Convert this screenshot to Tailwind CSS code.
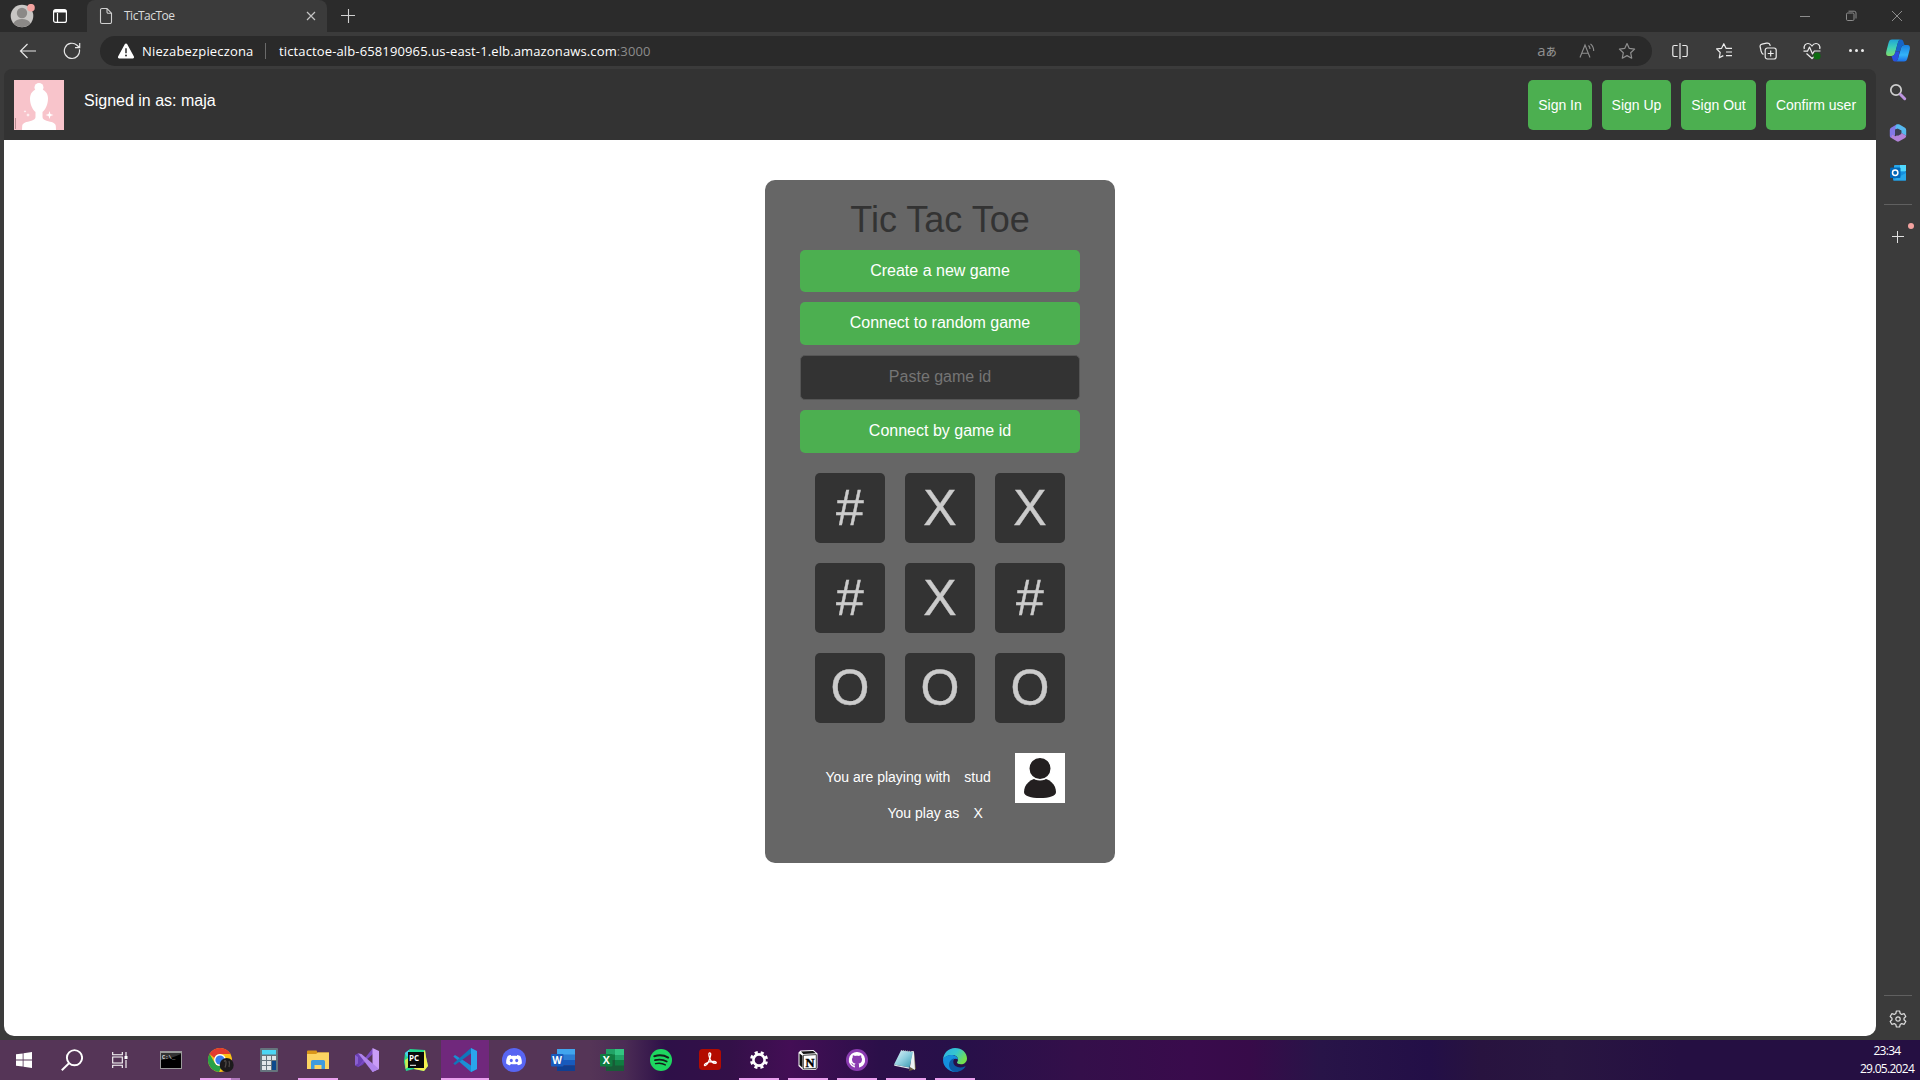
<!DOCTYPE html>
<html lang="pl">
<head>
<meta charset="utf-8">
<title>TicTacToe</title>
<script src="https://cdn.jsdelivr.net/npm/@tailwindcss/browser@4"></script>
</head>
<body class="h-screen w-screen overflow-hidden flex flex-col bg-[#3b3b3b] font-['Open_Sans',sans-serif] text-white">

<!-- Title bar -->
<div class="h-8 shrink-0 bg-[#2b2b2b] flex items-center">
  <div class="w-11 flex justify-center">
    <svg class="w-[26px] h-6" viewBox="0 0 26 24"><circle cx="13" cy="12" r="11.3" fill="#c8c6c4"/><circle cx="13" cy="9" r="5.2" fill="#8b8987"/><path d="M4.5 19.3c1.500-3 5-4.300 8.500-4.300s7 1.300 8.500 4.300A11.300 11.300 0 0 1 4.500 19.300z" fill="#8b8987"/><circle cx="22" cy="3.700" r="3.800" fill="#f4a3a0"/></svg>
  </div>
  <div class="w-8 flex justify-center">
    <svg class="w-4 h-4" viewBox="0 0 16 16" fill="none" stroke="#fff" stroke-width="1.200"><rect x="1.600" y="1.600" width="12.800" height="12.800" rx="2"/><path d="M2 4h12M5.500 5v9" /><path d="M2 3h12" stroke-width="2"/></svg>
  </div>
  <div class="ml-[11px] w-[240px] h-8 bg-[#3b3b3b] rounded-t-lg flex items-center pl-3">
    <svg class="w-[14px] h-[18px]" viewBox="0 0 14 18" fill="none" stroke="#d0d0d0" stroke-width="1.100"><path d="M1.500 3a1.500 1.500 0 0 1 1.500-1.500h5l4.500 4.700V15a1.500 1.500 0 0 1-1.500 1.500H3A1.500 1.500 0 0 1 1.500 15zM8 1.500V5a1.200 1.200 0 0 0 1.200 1.200h3.300"/></svg>
    <span class="ml-[11px] flex-1 text-[12px] leading-4 tracking-[-0.5px] text-[#dcdcdc]">TicTacToe</span>
    <svg class="w-[10px] h-[10px] mr-[11px]" viewBox="0 0 10 10" stroke="#c4c4c4" stroke-width="1.200"><path d="M1 1l8 8M9 1l-8 8"/></svg>
  </div>
  <svg class="ml-3.5 w-[14px] h-[14px]" viewBox="0 0 14 14" stroke="#d0d0d0" stroke-width="1.100"><path d="M7.500 0v14M0 6.500h14"/></svg>
  <div class="ml-auto flex">
    <div class="w-[46px] flex justify-center"><svg class="w-3 h-3" viewBox="0 0 12 12" stroke="#8d8d8d"><path d="M1 6.500h10"/></svg></div>
    <div class="w-[46px] flex justify-center"><svg class="w-3 h-3" viewBox="0 0 12 12" fill="none" stroke="#8d8d8d"><rect x="1.500" y="3" width="7.500" height="7.500" rx="1.200"/><path d="M3.500 1.200h5.700a1.800 1.800 0 0 1 1.800 1.800v5.500"/></svg></div>
    <div class="w-[46px] flex justify-center"><svg class="w-3 h-3" viewBox="0 0 12 12" stroke="#8d8d8d"><path d="M1 1l10 10M11 1L1 11"/></svg></div>
  </div>
</div>

<!-- Toolbar -->
<div class="h-[37px] shrink-0 bg-[#3b3b3b] flex items-center pl-1.5">
  <div class="w-11 flex justify-center"><svg class="w-[18px] h-4" viewBox="0 0 18 16" fill="none" stroke="#e6e6e6" stroke-width="1.200"><path d="M17 8H1.500M8.500 1L1.500 8l7 7"/></svg></div>
  <div class="w-11 flex justify-center"><svg class="w-[18px] h-[18px]" viewBox="0 0 18 18" fill="none" stroke="#e6e6e6" stroke-width="1.200"><path d="M16.400 7.400A7.600 7.600 0 1 1 14 3.200l2.500 2.300M16.700 1v4.700H12"/></svg></div>
  <div class="ml-1.5 w-[1552px] h-[30px] mt-px rounded-full bg-[#2a2a2a] flex items-center pr-[5px]">
    <svg class="ml-[17px] w-[18px] h-4" viewBox="0 0 18 16"><path d="M9 .5c.5 0 .9.300 1.100.6l6.800 12.500c.5.900-.1 1.900-1.100 1.900H2.200c-1 0-1.600-1-1.100-1.900L7.900 1.100C8.100.800 8.500.5 9 .5z" fill="#fff"/><path d="M9 5.200v5" stroke="#2a2a2a" stroke-width="1.500"/><circle cx="9" cy="12.600" r="1" fill="#2a2a2a"/></svg>
    <span class="ml-[7px] w-[112px] text-[13px] leading-[18px] pb-px tracking-[0.16px] whitespace-nowrap">Niezabezpieczona</span>
    <span class="ml-[11px] w-px h-4 bg-[#6a6a6a]"></span>
    <span class="ml-[13px] text-[13px] leading-[18px] pb-px tracking-[0.13px] whitespace-nowrap">tictactoe-alb-658190965.us-east-1.elb.amazonaws.com<span class="text-[#8c8c8c]">:3000</span></span>
    <div class="ml-auto flex items-center text-[#8f8f8f]">
      <div class="w-10 flex items-baseline justify-center leading-5 whitespace-nowrap pb-0.5"><span class="text-[15px]">a</span><span class="text-[11px] font-medium leading-4 font-['Noto_Sans_CJK_JP',sans-serif]">あ</span></div>
      <div class="w-10 flex justify-center"><svg class="w-4 h-4" viewBox="0 0 16 16" fill="none" stroke="currentColor" stroke-width="1.100"><path d="M1 14.500L6 2l5 12.500M2.700 10.200h6.600M9.500 2.500c1 1 1.500 2.200 1.500 3.500M11.500.8c2 1.700 3.200 4.200 3.200 7.200"/></svg></div>
      <div class="w-10 flex justify-center"><svg class="w-[18px] h-[18px]" viewBox="0 0 18 18" fill="none" stroke="currentColor" stroke-width="1.200" stroke-linejoin="round"><path d="M9 1.500l2.300 4.900 5.300.7-3.900 3.700 1 5.400L9 13.600l-4.700 2.600 1-5.400L1.400 7.100l5.300-.7z"/></svg></div>
    </div>
  </div>
  <div class="ml-1.5 flex items-center text-[#ececec]">
    <div class="w-11 pr-px flex justify-center"><svg class="w-4 h-4" viewBox="0 0 16 16" fill="none" stroke="currentColor" stroke-width="1.200"><path d="M8 0v16M5.700 2.500H2.200A1.400 1.400 0 0 0 .8 3.900v8.200a1.400 1.400 0 0 0 1.400 1.400h3.500M10.300 2.500h3.500a1.400 1.400 0 0 1 1.400 1.400v8.200a1.400 1.400 0 0 1-1.400 1.400h-3.500"/></svg></div>
    <div class="w-11 flex justify-center"><svg class="w-[18px] h-[18px]" viewBox="0 0 18 18" fill="none" stroke="currentColor" stroke-width="1.200" stroke-linejoin="round"><path d="M17 6.300h-6L8.800 1.700 6.600 6.300l-5 .6 3.600 3.600-.9 5.300 4-2.200M11 10h6M11 13.700h6"/></svg></div>
    <div class="w-11 flex justify-center"><svg class="w-[18px] h-[18px]" viewBox="0 0 18 18" fill="none" stroke="currentColor" stroke-width="1.200"><rect x="6.200" y="6" width="11" height="11" rx="2.200"/><path d="M11.700 8.500v6M8.700 11.500h6M4.500 12.300C2.500 11.800 2.600 11 2.100 9L1.200 5C.8 3.500 1.500 2.500 3 2.100L7.500 1.200c1.500-.3 3 .2 3.500 1.800l.3.900"/></svg></div>
    <div class="w-11 flex justify-center"><svg class="w-[18px] h-[18px]" viewBox="0 0 18 18" fill="none" stroke="currentColor" stroke-width="1.200" stroke-linejoin="round"><path d="M1.300 7C.5 3.500 2.800 1.500 5 1.500c1.800 0 3 .9 4 2.500 1-1.600 2.200-2.500 4-2.500 2.200 0 4.500 2 3.700 5.500M.5 9.200H4.500L6.500 5l3 7 1.800-3h6.200M3.500 11.500L9 16.500l2-1.800"/><circle cx="14" cy="14" r="3.600" fill="#0e6b12" stroke="none"/></svg></div>
    <div class="w-11 flex justify-center gap-[3px]"><i class="w-[3px] h-[3px] rounded-full bg-current"></i><i class="w-[3px] h-[3px] rounded-full bg-current"></i><i class="w-[3px] h-[3px] rounded-full bg-current"></i></div>
    <div class="w-10 flex justify-center"><svg class="w-6 h-[23px]" viewBox="0 0 24 23">
      <defs><linearGradient id="cpA" x1="0" y1="0" x2="0" y2="1"><stop offset="0" stop-color="#1fa3d8"/><stop offset=".5" stop-color="#3fd0b8"/><stop offset="1" stop-color="#7fdc6a"/></linearGradient><linearGradient id="cpB" x1="0" y1="0" x2="0" y2="1"><stop offset="0" stop-color="#1a7fe0"/><stop offset=".6" stop-color="#33b4f8"/><stop offset="1" stop-color="#1b6fe8"/></linearGradient></defs>
      <path d="M6 .5h9c-2 0-2.800 2-3.500 4.500L9 14c-.5 2-1.500 3-3.500 3H2.500C.3 17-.3 15 .3 12.500L2.500 4C3.200 1.500 4 .5 6 .5z" fill="url(#cpA)"/>
      <path d="M18 22.500H9c2 0 2.800-2 3.500-4.500L15 9c.5-2 1.500-3 3.500-3h3c2.200 0 2.800 2 2.200 4.500L21.500 19c-.7 2.500-1.500 3.500-3.500 3.500z" fill="url(#cpB)"/>
      <path d="M10.500.5H15c1.500 0 2 1 2.500 2.500L18.500 6c-2 0-3 1-3.500 3l-1 3.500h-4.500L11.500 5c.7-2.500 1.500-4.500 3.500-4.500z" fill="#1564c8"/>
      <path d="M9.500 12.500h4L12.500 18c-.7 2.500-1.500 4.500-3.500 4.500s-2-1-2.500-2.500l-1-3c2 0 3-1 3.500-3z" fill="#2a4fdd"/></svg></div>
  </div>
</div>

<!-- Page and side bar -->
<div class="flex-1 min-h-0 flex pl-1">
  <main class="w-[1872px] h-[967px] shrink-0 flex flex-col font-['Liberation_Sans',Arial,sans-serif]">
    <header class="h-[71px] shrink-0 bg-[#333] rounded-t-lg flex items-start px-2.5 pt-[11px]">
      <svg class="w-[50px] h-[50px]" viewBox="0 0 50 50"><rect width="50" height="50" fill="#f8c4cb"/><circle cx="25" cy="7.500" r="4.500" fill="#fff"/><path d="M25 9c6 0 9 4.500 9 9.500 0 6-2.500 11-5.500 13.500v5c0 2 1.500 3 4 3.700 5 1.300 9 1.800 9.300 5.300l.2 4H8l.2-4c.3-3.500 4.300-4 9.300-5.300 2.500-.7 4-1.700 4-3.700v-5C18.500 29.500 16 24.500 16 18.500 16 13.500 19 9 25 9z" fill="#fff"/><path d="M35.500 31l.9 3.100 3.100.9-3.100.9-.9 3.100-.9-3.100-3.100-.9 3.100-.9zM14 33l.5 1.500 1.500.5-1.500.5L14 37l-.5-1.500L12 35l1.500-.5zM11 30l.4 1 1 .4-1 .4-.4 1-.4-1-1-.4 1-.4z" fill="#fff"/><path d="M1.500 38v11" stroke="#b98a90"/></svg>
      <p class="ml-5 mt-3 text-base leading-[18px]">Signed in as: maja</p>
      <nav class="ml-auto flex gap-2.5 text-sm">
        <button class="h-[50px] w-16 rounded-[5px] bg-[#4caf50]">Sign In</button>
        <button class="h-[50px] w-[69px] rounded-[5px] bg-[#4caf50]">Sign Up</button>
        <button class="h-[50px] w-[75px] rounded-[5px] bg-[#4caf50]">Sign Out</button>
        <button class="h-[50px] w-[100px] rounded-[5px] bg-[#4caf50]">Confirm user</button>
      </nav>
    </header>

    <div class="flex-1 bg-white rounded-b-[10px] pt-10">
    <section class="mx-auto w-[350px] h-[683px] rounded-[10px] bg-[#666] flex flex-col items-center">
      <h1 class="mt-[19px] text-[36px] leading-[42px] text-[#333]">Tic Tac Toe</h1>
      <div class="mt-[9px] w-[280px] flex flex-col gap-2.5 text-base leading-[18px]">
        <button class="h-[42px] pb-px rounded-[5px] bg-[#4caf50]">Create a new game</button>
        <button class="h-[43px] pb-0.5 rounded-[5px] bg-[#4caf50]">Connect to random game</button>
        <input class="h-[45px] pb-0.5 rounded-[5px] bg-[#333] border border-[#555] text-center placeholder:text-[#757575]" placeholder="Paste game id">
        <button class="h-[43px] pb-0.5 rounded-[5px] bg-[#4caf50]">Connect by game id</button>
      </div>
      <div class="mt-5 grid grid-cols-3 gap-5 text-[50px] leading-[70px] text-[#ccc] text-center [-webkit-text-stroke:0.4px_#ccc]">
        <div class="size-[70px] rounded-[5px] bg-[#333]">#</div>
        <div class="size-[70px] rounded-[5px] bg-[#333]">X</div>
        <div class="size-[70px] rounded-[5px] bg-[#333]">X</div>
        <div class="size-[70px] rounded-[5px] bg-[#333]">#</div>
        <div class="size-[70px] rounded-[5px] bg-[#333]">X</div>
        <div class="size-[70px] rounded-[5px] bg-[#333]">#</div>
        <div class="size-[70px] rounded-[5px] bg-[#333]">O</div>
        <div class="size-[70px] rounded-[5px] bg-[#333]">O</div>
        <div class="size-[70px] rounded-[5px] bg-[#333]">O</div>
      </div>
      <div class="mt-[30px] w-[250px] flex justify-between text-sm leading-4">
        <div class="pt-4 pl-[10.5px]">
          <p class="flex gap-3.5"><span>You are playing with</span><span>stud</span></p>
          <p class="mt-5 ml-[62px] flex gap-3.5"><span>You play as</span><span>X</span></p>
        </div>
        <svg class="w-[50px] h-[50px]" viewBox="0 0 50 50"><rect width="50" height="50" fill="#fff"/><path d="M25 25c10 0 16 7 16 14 0 4-7 6-16 6S9 43 9 39c0-7 6-14 16-14z" fill="#231f20"/><circle cx="25" cy="15.500" r="11.300" fill="#231f20" stroke="#fff" stroke-width="1.600"/></svg>
      </div>
    </section>
    </div>
  </main>

  <aside class="w-11 flex flex-col items-center">
    <svg class="mt-[14px] mr-px w-[18px] h-[18px]" viewBox="0 0 18 18" fill="none"><circle cx="7" cy="7" r="5.200" stroke="#cfcfcf" stroke-width="1.700"/><path d="M11.500 11.500l4.200 4.200" stroke="#bd94e0" stroke-width="3" stroke-linecap="round"/></svg>
    <svg class="mt-[23px] w-[18px] h-[18px]" viewBox="0 0 18 18"><path d="M7.500.5L2 3.700A2.500 2.500 0 0 0 .8 5.900v5.800c0 .9.500 1.700 1.200 2.100L6 11.500V5.800l5-2.600z" fill="#8378e6"/><path d="M7.500.6c1-.6 2-.6 3 0L16 3.800c.8.500 1.200 1.200 1.200 2.100v5.800L12.300 9V6.500L6 4.200z" fill="#56b9ef"/><path d="M2 13.800L7.800 17.300c.8.500 1.600.5 2.400 0L16 14c.8-.5 1.200-1.300 1.200-2.200L12.500 9l-6.300 3.300-3-1.600z" fill="#b183d8"/><path d="M6 6l2.600-1.400 3.600 2v3.300L9 11.800l-3-1.500z" fill="#3d3f52"/></svg>
    <svg class="mt-[22px] w-[18px] h-[18px]" viewBox="0 0 18 18"><rect x="5" y="1" width="12" height="7" rx="1" fill="#28a8ea"/><rect x="11" y="1" width="6" height="6" fill="#50d9ff"/><path d="M4 8h13v7.500a1 1 0 0 1-1 1H5a1 1 0 0 1-1-1z" fill="#1490df"/><path d="M4 16l13-7v7.500H5z" fill="#28a8ea"/><rect x="1" y="3.500" width="10.500" height="10.500" rx="1" fill="#0067b8"/><circle cx="6.200" cy="8.700" r="2.700" fill="none" stroke="#fff" stroke-width="1.500"/></svg>
    <div class="mt-[22px] w-7 h-px bg-[#606060]"></div>
    <div class="relative mt-[26px] w-3 h-3">
      <svg class="w-3 h-3" viewBox="0 0 12 12" stroke="#e0e0e0"><path d="M5.500 0v12M0 5.500h12"/></svg>
      <i class="absolute left-4 -top-2 w-1.5 h-1.5 rounded-full bg-[#f4a3a0]"></i>
    </div>
    <div class="mt-auto w-7 h-px bg-[#606060]"></div>
    <svg class="mt-[14px] mb-[12px] w-[18px] h-[18px]" viewBox="0 0 18 18" fill="none" stroke="#dcdcdc" stroke-width="1.200" stroke-linejoin="round"><circle cx="9" cy="9" r="2.200"/><path d="M7.400 1h3.200l.6 2.500 1.500.9 2.500-.7 1.600 2.800L15 8.200v1.600l1.800 1.700-1.600 2.800-2.500-.7-1.500.9-.6 2.500H7.400l-.6-2.500-1.500-.9-2.500.7-1.600-2.800L3 9.800V8.200L1.200 6.500l1.600-2.800 2.500.7 1.500-.9z"/></svg>
  </aside>
</div>

<!-- Taskbar -->
<div class="h-10 shrink-0 flex bg-[linear-gradient(90deg,#553557_0px,#553557_590px,#4b2c55_625px,#2e1048_665px,#331048_730px,#430e55_790px,#2b0f49_880px,#271049_960px,#340f4a_1080px,#390b4c_1190px,#370b49_1250px,#281448_1320px,#230f47_1430px,#28133f_1480px,#291641_1560px,#250f42_1680px,#250f42_1920px)]">
  <div class="w-12 flex items-center justify-center"><svg class="w-4 h-4" viewBox="0 0 16 16" fill="#fff"><path d="M0 2.300l6.700-.9v6.200H0zM7.500 1.300L16 0v7.600H7.500zM0 8.400h6.700v6.200L0 13.700zM7.500 8.400H16V16l-8.500-1.200z"/></svg></div>
  <div class="w-12 flex items-center justify-center"><svg class="w-[22px] h-[22px]" viewBox="0 0 22 22" fill="none" stroke="#fff" stroke-width="1.900"><circle cx="13.500" cy="8.700" r="7.600"/><path d="M8 14.200L.8 21.300"/></svg></div>
  <div class="w-12 flex items-center justify-center"><svg class="w-4 h-4" viewBox="0 0 16 16" fill="none" stroke="#fff" stroke-width="1.100"><path d="M.7 0v2.700h9.600V0M.7 16v-2.700h9.600V16M.7 5h9.600v6H.7zM14 0v4M14 8v8"/><rect x="12.500" y="4" width="3" height="3" fill="#fff" stroke="none"/></svg></div>
  <div class="ml-[3px] flex gap-px">
    <div class="w-12 flex items-center justify-center"><svg class="w-[22px] h-[18px]" viewBox="0 0 22 18"><rect width="22" height="18" fill="#9a9a9a"/><rect x="1" y="2" width="20" height="15" fill="#000"/><path d="M1 9Q10 8 21 3V2H1z" fill="#333"/><text x="2" y="7.500" font-size="5.500" fill="#ddd" font-family="Liberation Mono" font-weight="bold">C:\_</text></svg></div>
    <div class="relative w-12 flex items-center justify-center">
      <svg class="w-[26px] h-6 ml-0.5" viewBox="0 0 26 24"><circle cx="12" cy="12" r="12" fill="#fbc116"/><path d="M1.600 6A12 12 0 0 1 22.400 6H12a6 6 0 0 0-5.500 4z" fill="#e33b2e"/><path d="M1.600 6l5.200 9A6 6 0 0 0 12 18l2-.3L11 24A12 12 0 0 1 1.600 6z" fill="#2aa147"/><circle cx="12" cy="12" r="5.900" fill="#fff"/><circle cx="12" cy="12" r="4.600" fill="#3b7de9"/><circle cx="18.700" cy="17" r="7" fill="#1c1a1c"/><path d="M16 13.500q2-2 2 1t-1 5M21 13q1 2 0 6" stroke="#4f4a47" fill="none" stroke-width="1.300"/></svg>
      <i class="absolute bottom-0 left-1 w-[31px] h-0.5 bg-[#eaa0ef]"></i><i class="absolute bottom-0 left-[35px] w-[9px] h-0.5 bg-[#b077bb]"></i>
    </div>
    <div class="w-12 flex items-center justify-center"><svg class="w-[18px] h-6" viewBox="0 0 18 24"><rect width="18" height="24" rx="1" fill="#65747d"/><rect x="2" y="2" width="14" height="4.500" fill="#4cd6f5"/><g fill="#dfe5e8"><rect x="2" y="8" width="4" height="4"/><rect x="7" y="8" width="4" height="4"/><rect x="12" y="8" width="4" height="4"/><rect x="2" y="13" width="4" height="4"/><rect x="7" y="13" width="4" height="4"/><rect x="2" y="18" width="4" height="4"/><rect x="7" y="18" width="4" height="4"/></g><rect x="12" y="13" width="4" height="9" fill="#0d4a8c"/></svg></div>
    <div class="relative w-12 flex items-center justify-center"><svg class="w-[22px] h-5" viewBox="0 0 22 20"><path d="M0 1.500A1 1 0 0 1 1 .5h8.500l1 2H22V6H0z" fill="#d9971a"/><path d="M0 4h9l2-1.500h11V19H0z" fill="#fcd462"/><path d="M4 19v-7.500a1.500 1.500 0 0 1 1.500-1.500h11a1.500 1.500 0 0 1 1.500 1.500V19h-3.500v-4h-7v4z" fill="#3f9ade"/></svg><i class="absolute bottom-0 left-1 w-10 h-0.5 bg-[#eaa0ef]"></i></div>
    <div class="w-12 flex items-center justify-center"><svg class="w-6 h-6" viewBox="0 0 24 24"><path d="M0 7l3-1.800L11.500 13l-4 4L3 19l-3-1.500z" fill="#6a3fb4"/><path d="M0 7l3 2v6.500l-3 2z" fill="#8a60d0"/><path d="M3 19L17.500.5 19 5 4.500 18z" fill="#7d4cc4"/><path d="M17.500 0L24 3v18l-6.500 3z" fill="#c99cf8"/><path d="M3 5.200L6.500 6 24 21l-6.500 3z" fill="#b084ec"/></svg></div>
    <div class="w-12 flex items-center justify-center"><svg class="w-6 h-6" viewBox="0 0 24 24"><path d="M1 5L6 1l15 1 1 7 2 9-4 5-10-2-8 2-2-9z" fill="#22d88f"/><path d="M17 7l4-5 1 7 2 9-4 5-10-2z" fill="#f7ef4e"/><path d="M1 5l4-3 1 4-3 3z" fill="#4acff0"/><path d="M1 12l3-2v9l-2.500 2z" fill="#c9ee55"/><rect x="4" y="4" width="16" height="16" fill="#0a0a0a"/><text x="5" y="12.500" font-size="8" font-weight="bold" fill="#fff" font-family="Open Sans">PC</text><path d="M6 17.300h6" stroke="#fff"/></svg></div>
    <div class="relative w-12 bg-[#70287c] flex items-center justify-center"><svg class="w-6 h-6" viewBox="0 0 24 24"><path d="M.3 8.500L2 7l22 14-6 3z" fill="#1a8fd4"/><path d="M.3 15.500L2 17 20 4 18 0z" fill="#0f77bb"/><path d="M18 0l6 3v18l-6 3z" fill="#2aa5ec"/><path d="M18 6.500v11L10.800 12z" fill="#70287c"/></svg><i class="absolute bottom-0 left-0 w-12 h-0.5 bg-[#eaa0ef]"></i></div>
    <div class="w-12 flex items-center justify-center"><svg class="w-6 h-6" viewBox="0 0 24 24"><circle cx="12" cy="12" r="12" fill="#5865f2"/><path d="M8.800 6.900c-1.300.2-2.400.6-3 1C4.500 10 4 12.500 4.200 15.500c1.200 1 2.400 1.500 3.800 1.800l.9-1.400c2 .5 4.200.5 6.200 0l.9 1.400c1.400-.3 2.600-.8 3.800-1.800.2-3-.3-5.500-1.600-7.600-.6-.4-1.700-.8-3-1l-.5 1c-1.800-.3-3.600-.3-5.400 0z" fill="#fff"/><ellipse cx="9.300" cy="12.500" rx="1.500" ry="1.700" fill="#5865f2"/><ellipse cx="14.700" cy="12.500" rx="1.500" ry="1.700" fill="#5865f2"/></svg></div>
    <div class="w-12 flex items-center justify-center"><svg class="w-6 h-[22px]" viewBox="0 0 24 22"><rect x="6" width="18" height="6" fill="#41a5ee"/><rect x="6" y="5.500" width="18" height="5.500" fill="#2b7cd3"/><rect x="6" y="11" width="18" height="5.500" fill="#185abd"/><rect x="6" y="16.500" width="18" height="5.500" fill="#103f91"/><rect y="5" width="12.500" height="12.500" rx="1" fill="#185abd"/><text x="6.200" y="15" text-anchor="middle" font-size="10" font-weight="bold" fill="#fff" font-family="Open Sans">W</text></svg></div>
    <div class="w-12 flex items-center justify-center"><svg class="w-6 h-[22px]" viewBox="0 0 24 22"><rect x="6" width="18" height="22" fill="#21a366"/><rect x="15" width="9" height="6" fill="#33c481"/><rect x="6" y="5.500" width="9" height="5.500" fill="#107c41"/><rect x="6" y="11" width="18" height="11" fill="#185c37"/><rect x="15" y="11" width="9" height="5.500" fill="#107c41"/><rect y="5" width="12.500" height="12.500" rx="1" fill="#107c41"/><text x="6.200" y="15" text-anchor="middle" font-size="10.500" font-weight="bold" fill="#fff" font-family="Open Sans">X</text></svg></div>
    <div class="w-12 flex items-center justify-center"><svg class="w-[22px] h-[22px]" viewBox="0 0 23 23" fill="none" stroke="#13201a" stroke-linecap="round"><circle cx="11.500" cy="11.500" r="11.500" fill="#1ed760" stroke="none"/><path d="M4.500 7.500c5-1.400 10.500-.9 14.500 1.400" stroke-width="2.100"/><path d="M5.200 11.700c4.400-1.200 8.700-.7 12.300 1.400" stroke-width="1.800"/><path d="M5.800 15.300c3.800-.9 7.200-.5 10.200 1.300" stroke-width="1.500"/></svg></div>
    <div class="w-12 flex items-center justify-center"><svg class="w-[22px] h-[22px]" viewBox="0 0 22 22" fill="none"><rect width="22" height="21" rx="3.500" fill="#b30b00"/><path d="M10.500 4c1.700-.3 1.500 2 .3 5.500-1 3-3 6.500-4.500 7-1.200.2-1.300-1 .3-2 2-1.200 6-2.200 8.900-2 2 .2 2.400 1.800.8 1.800-2 0-4.500-2.200-5.500-4.800-.8-2.300-1.500-5.200-.3-5.500z" stroke="#fff" stroke-width="1.300"/></svg></div>
    <div class="relative w-12 flex items-center justify-center"><svg class="w-5 h-5" viewBox="0 0 20 20" fill="none" stroke="#fff"><circle cx="10" cy="10" r="5.600" stroke-width="2.600"/><circle cx="10" cy="10" r="7.700" stroke-width="2.700" stroke-dasharray="3.100 2.948" stroke-dashoffset="-1.470"/></svg><i class="absolute bottom-0 left-1 w-10 h-0.5 bg-[#eaa0ef]"></i></div>
    <div class="relative w-12 flex items-center justify-center"><svg class="w-5 h-5" viewBox="0 0 20 20"><path d="M.5 2.500L2.500.5 15.500 0l4 3.500V18l-1.500 1.700-13 .3L.5 16z" fill="#fff"/><path d="M1.500 3.500l3 2.300v12l-3-2.800zM3 1.500l12-.5 3 2.300-12.700.8z" fill="#111"/><path d="M5.300 5.300l13-.7v13.800l-13 .6z" fill="#fff" stroke="#111" stroke-width=".8"/><text x="11.900" y="16.500" text-anchor="middle" font-size="12.500" font-weight="bold" fill="#000" stroke="#000" stroke-width=".4" font-family="Liberation Serif">N</text></svg><i class="absolute bottom-0 left-1 w-10 h-0.5 bg-[#eaa0ef]"></i></div>
    <div class="relative w-12 flex items-center justify-center"><svg class="w-[22px] h-[22px]" viewBox="0 0 22 22"><circle cx="11" cy="11" r="11" fill="#8a3bb0"/><path d="M11 3a8 8 0 0 0-2.700 15.600c.5.100.6-.2.600-.5v-1.700c-2.200.4-2.700-.7-3-1.400-.2-.4-.5-.8-.9-1 1.200-.2 1.500 1 2 1.400.6.500 1.300.4 2 .1.100-.5.300-.8.500-1-1.900-.3-3.500-1.100-3.500-4 0-.9.300-1.600.8-2.200-.2-.7-.1-1.500.1-2.100.8 0 1.500.4 2.100.8 1.300-.3 2.700-.3 4 0 .6-.4 1.300-.8 2.100-.8.200.6.300 1.400.1 2.100.5.600.8 1.300.8 2.200 0 2.900-1.600 3.700-3.500 4 .3.300.5.800.5 1.500v2.100c0 .3.200.6.600.5A8 8 0 0 0 11 3z" fill="#fff"/></svg><i class="absolute bottom-0 left-1 w-10 h-0.5 bg-[#eaa0ef]"></i></div>
    <div class="relative w-12 flex items-center justify-center"><svg class="w-6 h-[22px]" viewBox="0 0 24 22"><defs><linearGradient id="np" x1="0" y1="0" x2="1" y2="1"><stop offset="0" stop-color="#e4f5fa"/><stop offset=".5" stop-color="#8fcfdf"/><stop offset="1" stop-color="#3596ad"/></linearGradient></defs><path d="M20 3l2 17-7 2z" fill="#6b5e40"/><path d="M18 2l2 .5L21 21l-5-3z" fill="#eef2f3"/><path d="M7 1.500l12 1.300L15.500 18.500 0 15.500z" fill="url(#np)"/><path d="M0 15.500l15.500 3-.3 1.300L.3 16.700z" fill="#d9e6e9"/><path d="M7 1.500L20 2.800" stroke="#bbb" stroke-dasharray="1 1"/></svg><i class="absolute bottom-0 left-1 w-10 h-0.5 bg-[#eaa0ef]"></i></div>
    <div class="relative w-12 flex items-center justify-center"><svg class="w-6 h-6" viewBox="0 0 24 24"><defs><linearGradient id="eg" x1="0" y1="0" x2="1" y2=".5"><stop offset="0" stop-color="#2eaee6"/><stop offset=".55" stop-color="#35c6cf"/><stop offset="1" stop-color="#74e04e"/></linearGradient></defs><path d="M0 11.500C.5 5 5.500 0 12 0c7 0 12 4.800 12 10.500 0 3.500-2.800 5.800-6 5.800-2.700 0-4-.9-4-1.700 0-.7 1-1.200 1-3C15 9 12.500 7 9 7c-4 0-7.500 2-9 4.500z" fill="url(#eg)"/><path d="M0 11.500C1.500 8.500 4.500 7 8 7c4 0 7 2 7 4.500-3-2-7 .5-6.500 4.500.4 3.500 3.500 7 7 7.300A12 12 0 0 1 0 11.500z" fill="#1490df"/><path d="M10.500 10.500C7.500 11.500 6 14 6 17c0 3.500 3 6.700 6.500 7 4 .1 7.500-1.800 9.800-5 .3-.5-.2-.8-.6-.6-5 2.400-11.200.3-11.400-4.400 0-1.200.3-2.400 1.200-3.200z" fill="#0c59a4"/></svg><i class="absolute bottom-0 left-1 w-10 h-0.5 bg-[#eaa0ef]"></i></div>
  </div>
  <div class="ml-auto w-[66px] text-center text-[12px] leading-[18px] tracking-[-0.7px] pt-0.5 whitespace-nowrap"><p>23:34</p><p>29.05.2024</p></div>
</div>
</body>
</html>
